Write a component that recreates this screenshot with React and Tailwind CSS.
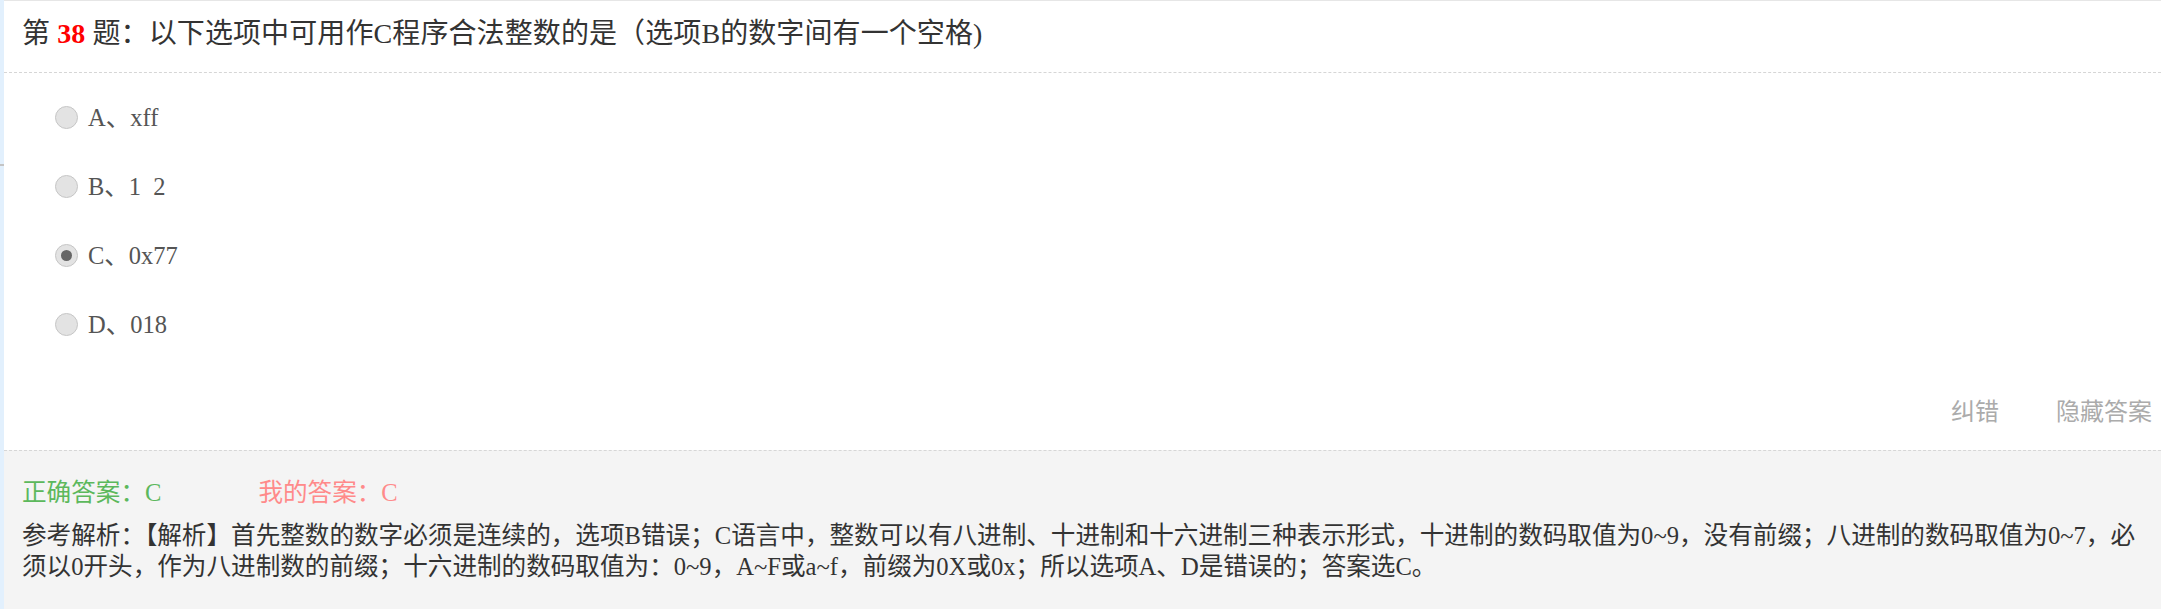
import React from 'react';

const options = [
  { key: 'A', text: 'xff' },
  { key: 'B', text: '1  2' },
  { key: 'C', text: '0x77', checked: true },
  { key: 'D', text: '018' },
];

const Radio = ({ checked }) => (
  <span className="w-[23px] h-[23px] rounded-full border border-[#c6c6c6] bg-[#e3e3e3] flex items-center justify-center shrink-0">
    {checked && <span className="w-[11px] h-[11px] rounded-full bg-[#666666]" />}
  </span>
);

const App = () => {
  return (
    <div className="min-h-screen flex bg-white font-['Liberation_Serif','Noto_Sans_CJK_SC',serif]">
      {/* side strip */}
      <div className="w-[4px] shrink-0 bg-[#e2f0fd] flex flex-col">
        <div className="mt-[164px] h-[2px] bg-[#c4c4c4]" />
      </div>

      <div className="flex-1 flex flex-col border-t border-[#e6e6e6]">
        {/* Question title */}
        <div className="h-[72px] pl-[18px] pb-[6px] flex items-center border-b border-dashed border-[#d6d6d6] text-[28px] tracking-[0.1px] text-[#333333]">
          <span>第 <b className="text-[#ff0000] font-bold">38</b> 题：以下选项中可用作C程序合法整数的是（选项B的数字间有一个空格)</span>
        </div>

        {/* Options */}
        <div className="pt-[10px] pl-[51px]">
          {options.map(o => (
            <label key={o.key} className="h-[69px] flex items-center gap-[10px] text-[24.5px] text-[#555555]">
              <Radio checked={o.checked} />
              <span className="pt-[1px] whitespace-pre">{o.key}、{o.text}</span>
            </label>
          ))}
        </div>

        {/* Actions */}
        <div className="h-[91px] pt-[11px] pr-[9px] flex items-center justify-end gap-[57px] text-[24px] text-[#ababab] font-['Noto_Sans_CJK_SC',sans-serif]">
          <span>纠错</span>
          <span>隐藏答案</span>
        </div>

        {/* Answer panel */}
        <div className="flex-1 bg-[#f4f4f4] border-t border-dashed border-[#d6d6d6] pl-[18px] pr-[9px] pt-[26px] text-[24.6px] leading-[31px]">
          <div className="flex">
            <span className="text-[#5cb85c] mr-[97px]">正确答案：C</span>
            <span className="text-[#ff8a8a]">我的答案：C</span>
          </div>
          <p className="mt-[12px] text-[#333333]">
            参考解析：【解析】首先整数的数字必须是连续的，选项B错误；C语言中，整数可以有八进制、十进制和十六进制三种表示形式，十进制的数码取值为0~9，没有前缀；八进制的数码取值为0~7，必须以0开头，作为八进制数的前缀；十六进制的数码取值为：0~9，A~F或a~f，前缀为0X或0x；所以选项A、D是错误的；答案选C。
          </p>
        </div>
      </div>
    </div>
  );
};

export default App;
